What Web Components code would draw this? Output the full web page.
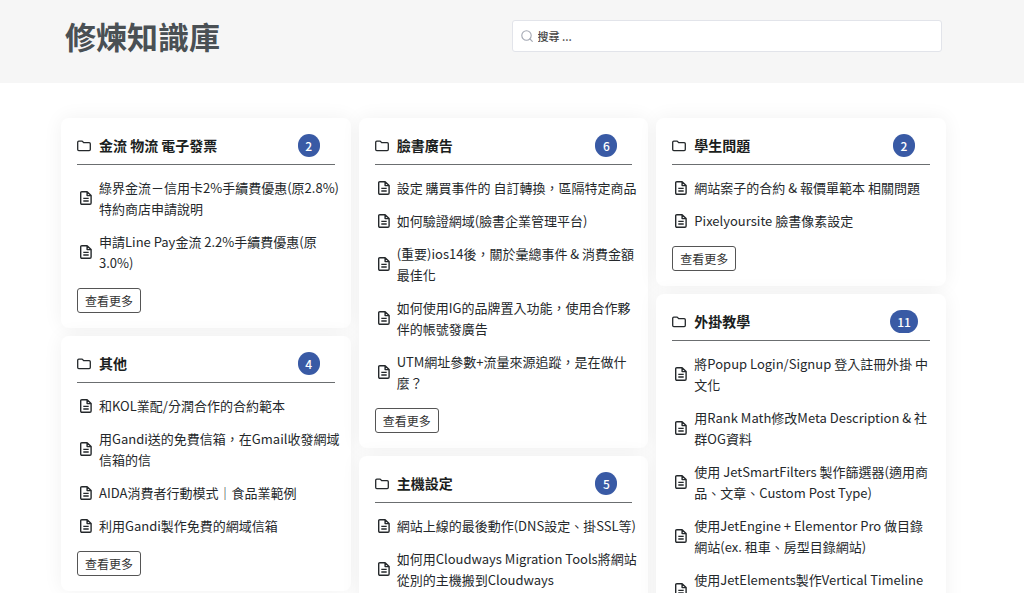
<!DOCTYPE html>
<html lang="zh-Hant">
<head>
<meta charset="utf-8">
<meta name="viewport" content="width=device-width, initial-scale=1">
<title>修煉知識庫</title>
<style>
  body { margin: 0; background: #fff; color: #24282b; font-family: "Noto Sans CJK TC", "Noto Sans", sans-serif; font-size: 13px; line-height: 21px; --gutter: 61px; --gutter-end: 78px; }
</style>
</head>
<body>
<kb-header heading="修煉知識庫"></kb-header>
<kb-board>
  <kb-column>
    <kb-card heading="金流 物流 電子發票" count="2">
      <kb-article>綠界金流－信用卡2%手續費優惠(原2.8%)<br>特約商店申請說明</kb-article>
      <kb-article>申請Line Pay金流 2.2%手續費優惠(原<br>3.0%)</kb-article>
    </kb-card>
    <kb-card heading="其他" count="4">
      <kb-article>和KOL業配/分潤合作的合約範本</kb-article>
      <kb-article>用Gandi送的免費信箱，在Gmail收發網域<br>信箱的信</kb-article>
      <kb-article>AIDA消費者行動模式｜食品業範例</kb-article>
      <kb-article>利用Gandi製作免費的網域信箱</kb-article>
    </kb-card>
  </kb-column>
  <kb-column>
    <kb-card heading="臉書廣告" count="6">
      <kb-article>設定 購買事件的 自訂轉換，區隔特定商品</kb-article>
      <kb-article>如何驗證網域(臉書企業管理平台)</kb-article>
      <kb-article>(重要)ios14後，關於彙總事件 &amp; 消費金額<br>最佳化</kb-article>
      <kb-article>如何使用IG的品牌置入功能，使用合作夥<br>伴的帳號發廣告</kb-article>
      <kb-article>UTM網址參數+流量來源追蹤，是在做什<br>麼？</kb-article>
    </kb-card>
    <kb-card heading="主機設定" count="5">
      <kb-article>網站上線的最後動作(DNS設定、掛SSL等)</kb-article>
      <kb-article>如何用Cloudways Migration Tools將網站<br>從別的主機搬到Cloudways</kb-article>
    </kb-card>
  </kb-column>
  <kb-column>
    <kb-card heading="學生問題" count="2">
      <kb-article>網站案子的合約 &amp; 報價單範本 相關問題</kb-article>
      <kb-article>Pixelyoursite 臉書像素設定</kb-article>
    </kb-card>
    <kb-card heading="外掛教學" count="11">
      <kb-article>將Popup Login/Signup 登入註冊外掛 中<br>文化</kb-article>
      <kb-article>用Rank Math修改Meta Description &amp; 社<br>群OG資料</kb-article>
      <kb-article>使用 JetSmartFilters 製作篩選器(適用商<br>品、文章、Custom Post Type)</kb-article>
      <kb-article>使用JetEngine + Elementor Pro 做目錄<br>網站(ex. 租車、房型目錄網站)</kb-article>
      <kb-article>使用JetElements製作Vertical Timeline<br>時間軸</kb-article>
    </kb-card>
  </kb-column>
</kb-board>

<script>
  const define = (name, html, setup) => {
    const template = document.createElement('template');
    template.innerHTML = html;
    customElements.define(name, class extends HTMLElement {
      constructor() {
        super();
        this.attachShadow({ mode: 'open' }).append(template.content.cloneNode(true));
      }
      connectedCallback() { if (setup) setup(this, this.shadowRoot); }
    });
  };

  define('kb-search', `
    <style>
      :host { display: block; }
      label { display: flex; align-items: center; gap: 5px; box-sizing: border-box; height: 32px; padding: 0 8px; background: #fff; border: 1px solid #e2e4ea; border-radius: 3px; }
      svg { flex: none; width: 12px; height: 12px; fill: none; stroke: #a3a8b3; stroke-width: 1.1; stroke-linecap: round; }
      input { flex: 1; min-width: 0; padding: 0; border: 0; outline: 0; background: none; color: #444; font: 500 11px/20px "Noto Sans CJK TC", sans-serif; }
      input::placeholder { color: #444; opacity: 1; }
    </style>
    <label>
      <svg viewBox="0 0 12 12" aria-hidden="true"><circle cx="5.5" cy="5.5" r="4.7"/><path d="M9 9l2.3 2.3"/></svg>
      <input type="search" placeholder="搜尋 ..." aria-label="搜尋">
    </label>`);

  define('kb-header', `
    <style>
      :host { display: block; background: #f6f6f6; }
      header { display: grid; grid-template-columns: 1fr 1fr; gap: 16px; align-items: center; box-sizing: border-box; min-height: 83px; padding: 8px calc(var(--gutter-end) + 4px) 19px calc(var(--gutter) + 4px); }
      h1 { margin: 0; color: #4a5054; font-size: 31px; line-height: 46px; font-weight: 700; }
    </style>
    <header><h1></h1><kb-search></kb-search></header>`,
    (host, root) => { root.querySelector('h1').textContent = host.getAttribute('heading'); });

  define('kb-board', `
    <style>
      :host { display: block; padding: 35px var(--gutter-end) 35px var(--gutter); }
      main { display: grid; grid-template-columns: repeat(3, minmax(0, 1fr)); gap: 8px; align-items: start; }
    </style>
    <main><slot></slot></main>`);

  define('kb-column', `
    <style>:host { display: flex; flex-direction: column; gap: 8px; }</style>
    <slot></slot>`);

  define('kb-card', `
    <style>
      :host { display: block; box-sizing: border-box; padding: 16px 16px 15px; background: #fff; border-radius: 8px; box-shadow: 0 0 20px rgba(0, 0, 0, .06); }
      section { display: flex; flex-direction: column; align-items: stretch; }
      header { display: flex; align-items: center; gap: 8px; padding: 0 15px 7px 0; border-bottom: 1px solid #6b6e70; }
      svg { flex: none; width: 14px; height: 12px; fill: none; stroke: #24282b; stroke-width: 1.3; stroke-linejoin: round; }
      h2 { flex: 1; margin: 0; font-size: 14px; line-height: 23px; font-weight: 700; color: #1b1e20; }
      .badge { flex: none; display: flex; justify-content: center; width: 22px; }
      .count { flex: none; box-sizing: border-box; min-width: 22px; padding: 0 7px; border-radius: 12px; background: #395aa5; color: #fff; font-size: 12px; line-height: 23px; font-weight: 500; text-align: center; }
      .list { display: flex; flex-direction: column; gap: 12px; padding: 12px 0 15px; }
      button { align-self: flex-start; box-sizing: border-box; height: 25px; padding: 0 7px; background: #fff; border: 1px solid #555; border-radius: 3px; color: #333; font: 400 12px/20px "Noto Sans CJK TC", sans-serif; }
    </style>
    <section>
      <header>
        <svg viewBox="0 0 14 12" aria-hidden="true"><path d="M1.8 1.1h3.4l1.6 1.6h5.4c.7 0 1.1.4 1.1 1.1v5.8c0 .7-.4 1.1-1.1 1.1H1.8c-.7 0-1.1-.4-1.1-1.1V2.2c0-.7.4-1.1 1.1-1.1z"/></svg>
        <h2></h2><span class="badge"><span class="count"></span></span>
      </header>
      <div class="list" role="list"><slot></slot></div>
      <button type="button">查看更多</button>
    </section>`,
    (host, root) => {
      root.querySelector('h2').textContent = host.getAttribute('heading');
      root.querySelector('.count').textContent = host.getAttribute('count');
    });

  define('kb-article', `
    <style>
      :host { display: flex; align-items: center; gap: 7px; padding-left: 3px; }
      svg { flex: none; width: 12px; height: 14px; fill: none; stroke: #24282b; stroke-width: 1.4; stroke-linejoin: round; }
      a { color: inherit; text-decoration: none; white-space: nowrap; }
    </style>
    <svg viewBox="0 0 12 14" aria-hidden="true"><path d="M1.900.7h5.200l4 3.900v7.500c0 .8-.4 1.200-1.200 1.200h-8c-.8 0-1.200-.4-1.200-1.200V1.900C.7 1.100 1.100.7 1.900.7zM7.100.7v3.900h4M3.300 7.400h5.400M3.300 10h5.400"/></svg>
    <a href="#"><slot></slot></a>`,
    host => host.setAttribute('role', 'listitem'));
</script>
</body>
</html>
